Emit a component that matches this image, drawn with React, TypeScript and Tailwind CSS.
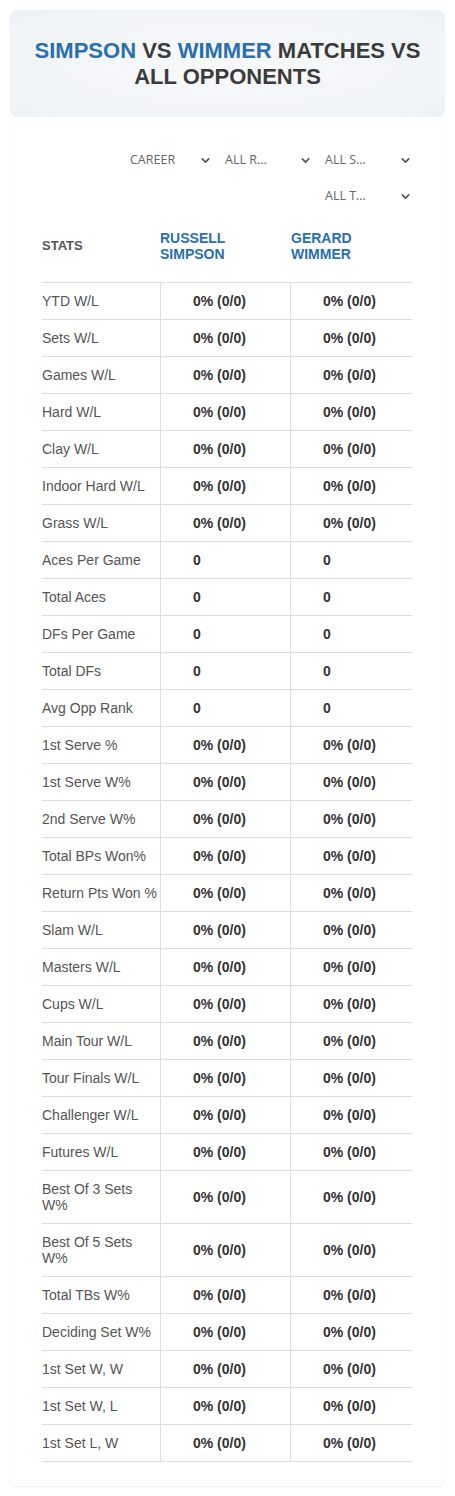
import { ChevronDown } from "lucide-react";

type StatRow = { label: string; a: string; b: string };

const PCT = "0% (0/0)";

const ROWS: StatRow[] = [
  { label: "YTD W/L", a: PCT, b: PCT },
  { label: "Sets W/L", a: PCT, b: PCT },
  { label: "Games W/L", a: PCT, b: PCT },
  { label: "Hard W/L", a: PCT, b: PCT },
  { label: "Clay W/L", a: PCT, b: PCT },
  { label: "Indoor Hard W/L", a: PCT, b: PCT },
  { label: "Grass W/L", a: PCT, b: PCT },
  { label: "Aces Per Game", a: "0", b: "0" },
  { label: "Total Aces", a: "0", b: "0" },
  { label: "DFs Per Game", a: "0", b: "0" },
  { label: "Total DFs", a: "0", b: "0" },
  { label: "Avg Opp Rank", a: "0", b: "0" },
  { label: "1st Serve %", a: PCT, b: PCT },
  { label: "1st Serve W%", a: PCT, b: PCT },
  { label: "2nd Serve W%", a: PCT, b: PCT },
  { label: "Total BPs Won%", a: PCT, b: PCT },
  { label: "Return Pts Won %", a: PCT, b: PCT },
  { label: "Slam W/L", a: PCT, b: PCT },
  { label: "Masters W/L", a: PCT, b: PCT },
  { label: "Cups W/L", a: PCT, b: PCT },
  { label: "Main Tour W/L", a: PCT, b: PCT },
  { label: "Tour Finals W/L", a: PCT, b: PCT },
  { label: "Challenger W/L", a: PCT, b: PCT },
  { label: "Futures W/L", a: PCT, b: PCT },
  { label: "Best Of 3 Sets W%", a: PCT, b: PCT },
  { label: "Best Of 5 Sets W%", a: PCT, b: PCT },
  { label: "Total TBs W%", a: PCT, b: PCT },
  { label: "Deciding Set W%", a: PCT, b: PCT },
  { label: "1st Set W, W", a: PCT, b: PCT },
  { label: "1st Set W, L", a: PCT, b: PCT },
  { label: "1st Set L, W", a: PCT, b: PCT },
];

// first select sits a bit further in than the others
const FILTERS = [
  { label: "CAREER", pad: "pl-[17px]" },
  { label: "ALL R…", pad: "pl-[12px]" },
  { label: "ALL S…", pad: "pl-[12px]" },
  { label: "ALL T…", pad: "pl-[12px]" },
];

function FilterSelect({ label, pad }: { label: string; pad: string }) {
  return (
    <div
      className={`flex h-[20px] w-[100px] items-center justify-between ${pad} pr-[1px] text-[12.5px] text-[#666] font-['Open_Sans',sans-serif]`}
    >
      <span>{label}</span>
      <ChevronDown className="h-[13px] w-[13px] text-[#555]" strokeWidth={3} />
    </div>
  );
}

export default function App() {
  return (
    <div className="min-h-[1496px] bg-white pt-[10px] px-[10px] font-['Liberation_Sans',Arial,sans-serif]">
      <div className="rounded-[8px] bg-white shadow-[0_1px_2px_rgba(0,0,0,0.07)] pb-[24px]">
        <div className="flex h-[107px] flex-col items-center justify-center rounded-[8px] bg-[radial-gradient(ellipse_at_center,#f8f9fb_0%,#eef2f6_100%)] px-[12px] text-center text-[22px] font-bold leading-[26px] text-[#3b3b3b]">
          <div>
            <span className="text-[#2a6fb0]">SIMPSON</span> VS{" "}
            <span className="text-[#2a6fb0]">WIMMER</span> MATCHES VS
          </div>
          <div>ALL OPPONENTS</div>
        </div>

        <div className="mt-[33px] ml-auto mr-[32px] flex w-[300px] flex-wrap justify-end gap-y-[16px]">
          {FILTERS.map((f) => (
            <FilterSelect key={f.label} label={f.label} pad={f.pad} />
          ))}
        </div>

        <div className="mx-[32px] mt-[12px]">
          <div className="grid grid-cols-[118px_130px_1fr] items-center pt-[12px] pb-[20px] font-bold leading-[16px]">
            <div className="text-[13px] text-[#555]">STATS</div>
            <div className="text-[14px] text-[#2a6fb0]">
              RUSSELL
              <br />
              SIMPSON
            </div>
            <div className="pl-[1px] text-[14px] text-[#2a6fb0]">
              GERARD
              <br />
              WIMMER
            </div>
          </div>

          <div className="border-t border-[#dedede]">
            {ROWS.map((row) => (
              <div
                key={row.label}
                className="grid grid-cols-[118px_130px_1fr] border-b border-[#dedede] text-[14px] leading-[16px]"
              >
                <div className="py-[10px] text-[#555]">{row.label}</div>
                <div className="flex items-center border-l border-[#dedede] pl-[32px] font-bold text-[#333]">
                  {row.a}
                </div>
                <div className="flex items-center border-l border-[#dedede] pl-[32px] font-bold text-[#333]">
                  {row.b}
                </div>
              </div>
            ))}
          </div>
        </div>
      </div>
    </div>
  );
}
